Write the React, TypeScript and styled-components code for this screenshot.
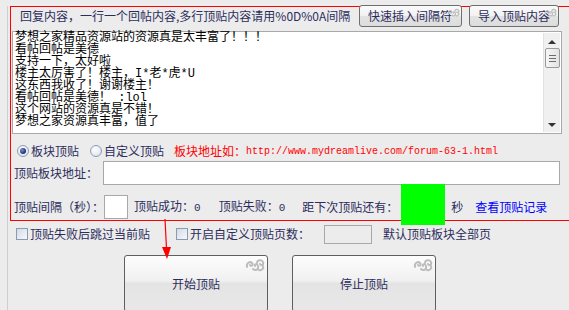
import styled, { createGlobalStyle } from "styled-components";

const GlobalStyle = createGlobalStyle`
  html, body {
    margin: 0;
    padding: 0;
    background: #ececec;
    overflow: hidden;
  }
  body {
    font-family: "Noto Sans CJK SC", "Liberation Sans", sans-serif;
    font-size: 12px;
    color: #2d2d5c;
  }
`

const Frame = styled.div`
    position: relative;
    margin-left: 7px;
    border-left: 1px solid #cfcfcf;
    height: 310px;
    width: 620px;
`

const Panel = styled.div`
    box-sizing: border-box;
    margin-left: 2px;
    margin-top: 6px;
    width: 600px;
    height: 215px;
    border: 1px solid #ff0000;
`

const Content = styled.div`
    width: 550px;
    display: flex;
    flex-direction: column;
`

const Header = styled.div`
    display: flex;
    align-items: center;
    height: 22px;
    margin-top: -2px;
    padding-right: 2px;
`

const Title = styled.span`
    margin-left: 9px;
    margin-right: auto;
    line-height: 14px;
    white-space: nowrap;
`

const SmallButton = styled.button<{ $w: number; $ml: number }>`
    position: relative;
    box-sizing: border-box;
    width: ${p => p.$w}px;
    height: 22px;
    margin-left: ${p => p.$ml}px;
    padding: 0;
    border: 1px solid #6f6f6f;
    border-radius: 3px;
    background: linear-gradient(#fbfbfb 0%, #f1f1f1 50%, #e3e3e3 51%, #dcdcdc 100%);
    font: inherit;
    color: #2d2d5c;
    text-align: left;
    padding-left: 8px;
    line-height: 14px;
    svg {
        position: absolute;
        top: 1px;
        right: 1px;
    }
`

const TextBox = styled.div`
    display: flex;
    box-sizing: border-box;
    margin-top: 4px;
    margin-left: 1px;
    width: 550px;
    height: 103px;
    border: 1px solid #a9a9a9;
    background: #fff;
`

const Lines = styled.div`
    flex: 1;
    padding: 0 0 0 2px;
    white-space: pre;
    font-size: 12px;
    line-height: 12px;
    color: #000;
    font-family: "Liberation Mono", "Noto Sans CJK SC", monospace;
`

const ScrollBar = styled.div`
    width: 16px;
    margin: 1px 1px 1px 0;
    background: #f0f0f0;
    border-left: 1px solid #e2e2e2;
    display: flex;
    flex-direction: column;
    align-items: center;
`

const Arrow = styled.div<{ $down?: boolean }>`
    width: 0;
    height: 0;
    border-left: 4px solid transparent;
    border-right: 4px solid transparent;
    ${p => p.$down ? "border-top: 4px solid #333;" : "border-bottom: 4px solid #333;"}
    margin-top: ${p => p.$down ? "auto" : "7px"};
    margin-bottom: ${p => p.$down ? "5px" : "0"};
`

const Thumb = styled.div`
    box-sizing: border-box;
    width: 15px;
    height: 20px;
    margin-top: 4px;
    border: 1px solid #9a9a9a;
    border-radius: 2px;
    background: linear-gradient(90deg, #f6f6f6, #e2e2e2);
    display: flex;
    flex-direction: column;
    justify-content: center;
    align-items: center;
    gap: 2px;
    span {
        width: 7px;
        height: 1px;
        background: #6c6c6c;
    }
`

const Row = styled.div<{ $mt: number; $h: number }>`
    display: flex;
    align-items: center;
    margin-top: ${p => p.$mt}px;
    height: ${p => p.$h}px;
    white-space: nowrap;
`

const Text = styled.span<{ $ml?: number; $color?: string; $w?: number }>`
    margin-left: ${p => p.$ml ?? 0}px;
    color: ${p => p.$color ?? "inherit"};
    line-height: 14px;
    ${p => p.$w ? `width: ${p.$w}px;` : ""}
`

const Mono = styled.span`
    font-family: "Liberation Mono", monospace;
    font-size: 10px;
    color: #ff0000;
`

const Num = styled.span`
    font-family: "Liberation Mono", monospace;
    font-size: 11px;
`

const Radio = styled.span<{ $checked?: boolean; $ml: number }>`
    box-sizing: border-box;
    width: 12px;
    height: 12px;
    margin-left: ${p => p.$ml}px;
    margin-right: 2px;
    border-radius: 50%;
    border: 1px solid #8d9db5;
    background: radial-gradient(circle at 40% 35%, #ffffff 0%, #e6ebf2 60%, #c9d2de 100%);
    display: flex;
    align-items: center;
    justify-content: center;
    &::after {
        content: "";
        display: ${p => p.$checked ? "block" : "none"};
        width: 6px;
        height: 6px;
        border-radius: 50%;
        background: radial-gradient(circle at 35% 35%, #7d8fc8 0%, #1c2a78 70%);
    }
`

const Check = styled.span<{ $ml: number }>`
    box-sizing: border-box;
    width: 12px;
    height: 12px;
    margin-left: ${p => p.$ml}px;
    margin-right: 2px;
    border: 1px solid #8a9cb2;
    background: linear-gradient(135deg, #d4dbe5, #f7f8fa);
`

const Input = styled.div<{ $w: number; $h: number; $ml?: number; $bg?: string }>`
    box-sizing: border-box;
    width: ${p => p.$w}px;
    height: ${p => p.$h}px;
    margin-left: ${p => p.$ml ?? 0}px;
    border: 1px solid #a8a8a8;
    background: ${p => p.$bg ?? "#fff"};
`

const Countdown = styled.div`
    align-self: flex-start;
    width: 44px;
    height: 41px;
    margin-top: -11px;
    margin-left: 3px;
    background: #00ff00;
`

const LinkText = styled.span`
    margin-left: 12px;
    color: #0000ff;
    line-height: 14px;
`

const BigButton = styled.button<{ $ml: number }>`
    position: relative;
    box-sizing: border-box;
    width: 144px;
    height: 57px;
    margin-left: ${p => p.$ml}px;
    border: 1px solid #5f5f5f;
    border-radius: 3px;
    background: linear-gradient(#fdfdfd 0%, #f0f0f0 45%, #e4e4e4 50%, #e8e8e8 100%);
    font: inherit;
    color: #2d2d5c;
    padding: 0;
    svg {
        position: absolute;
        top: 2px;
        right: 2px;
    }
`

const Annotation = styled.svg`
    position: absolute;
    left: 152px;
    top: 213px;
`

function Swirl({ w, h }: { w: number; h: number }) {
    return (
        <svg width={w} height={h} viewBox="0 0 20 14" fill="none" stroke="#bdbdbd" strokeWidth="2" strokeLinecap="round">
            <path d="M2 9 C1 5 5 3 7 5 C9 7 6 9 5 7" />
            <path d="M8 11 C10 13 14 12 13 8 C12 5 9 6 10 8" />
            <path d="M12 5 C12 2 17 1 18 4 C19 7 16 8 15 6" />
            <path d="M14 12 C17 13 19 10 18 8" />
        </svg>
    )
}

const lines = [
    "梦想之家精品资源站的资源真是太丰富了！！！",
    "看帖回帖是美德",
    "支持一下，太好啦",
    "楼主太厉害了！楼主，I*老*虎*U",
    "这东西我收了！谢谢楼主！",
    "看帖回帖是美德！ :lol",
    "这个网站的资源真是不错！",
    "梦想之家资源真丰富，值了",
]

function App() {
    return (
        <>
            <GlobalStyle />
            <Frame>
                <Panel>
                    <Content>
                        <Header>
                            <Title>回复内容，一行一个回帖内容,多行顶贴内容请用%0D%0A间隔</Title>
                            <SmallButton $w={103} $ml={0}>快速插入间隔符<Swirl w={13} h={11} /></SmallButton>
                            <SmallButton $w={90} $ml={7}>导入顶贴内容<Swirl w={13} h={11} /></SmallButton>
                        </Header>
                        <TextBox>
                            <Lines>{lines.join("\n")}</Lines>
                            <ScrollBar>
                                <Arrow />
                                <Thumb><span /><span /><span /></Thumb>
                                <Arrow $down />
                            </ScrollBar>
                        </TextBox>
                        <Row $mt={10} $h={14}>
                            <Radio $checked $ml={6} />
                            <Text>板块顶贴</Text>
                            <Radio $ml={11} />
                            <Text>自定义顶贴</Text>
                            <Text $ml={10} $color="#ff0000">板块地址如：</Text>
                            <Mono>http://www.mydreamlive.com/forum-63-1.html</Mono>
                        </Row>
                        <Row $mt={3} $h={24}>
                            <Text $ml={3} $w={89}>顶贴板块地址：</Text>
                            <Input $w={457} $h={24} />
                        </Row>
                        <Row $mt={10} $h={24}>
                            <Text $ml={3}>顶贴间隔（秒）：</Text>
                            <Input $w={24} $h={24} />
                            <Text $ml={6}>顶贴成功：<Num>0</Num></Text>
                            <Text $ml={18}>顶贴失败：<Num>0</Num></Text>
                            <Text $ml={17}>距下次顶贴还有：</Text>
                            <Countdown />
                            <Text $ml={6}>秒</Text>
                            <LinkText>查看顶贴记录</LinkText>
                        </Row>
                    </Content>
                </Panel>
                <Row $mt={3} $h={20}>
                    <Check $ml={8} />
                    <Text>顶贴失败后跳过当前贴</Text>
                    <Check $ml={26} />
                    <Text>开启自定义顶贴页数：</Text>
                    <Input $w={48} $h={19} $ml={14} $bg="#ececec" />
                    <Text $ml={11}>默认顶贴板块全部页</Text>
                </Row>
                <Row $mt={11} $h={57}>
                    <BigButton $ml={116}>开始顶贴<Swirl w={20} h={14} /></BigButton>
                    <BigButton $ml={24}>停止顶贴<Swirl w={20} h={14} /></BigButton>
                </Row>
                <Annotation width="14" height="42" viewBox="0 0 14 42">
                    <line x1="5" y1="0" x2="6.5" y2="30" stroke="#ff0000" strokeWidth="1.2" />
                    <polygon points="2,28 11,28 7,40" fill="#ff0000" />
                </Annotation>
            </Frame>
        </>
    )
}

export default App;
